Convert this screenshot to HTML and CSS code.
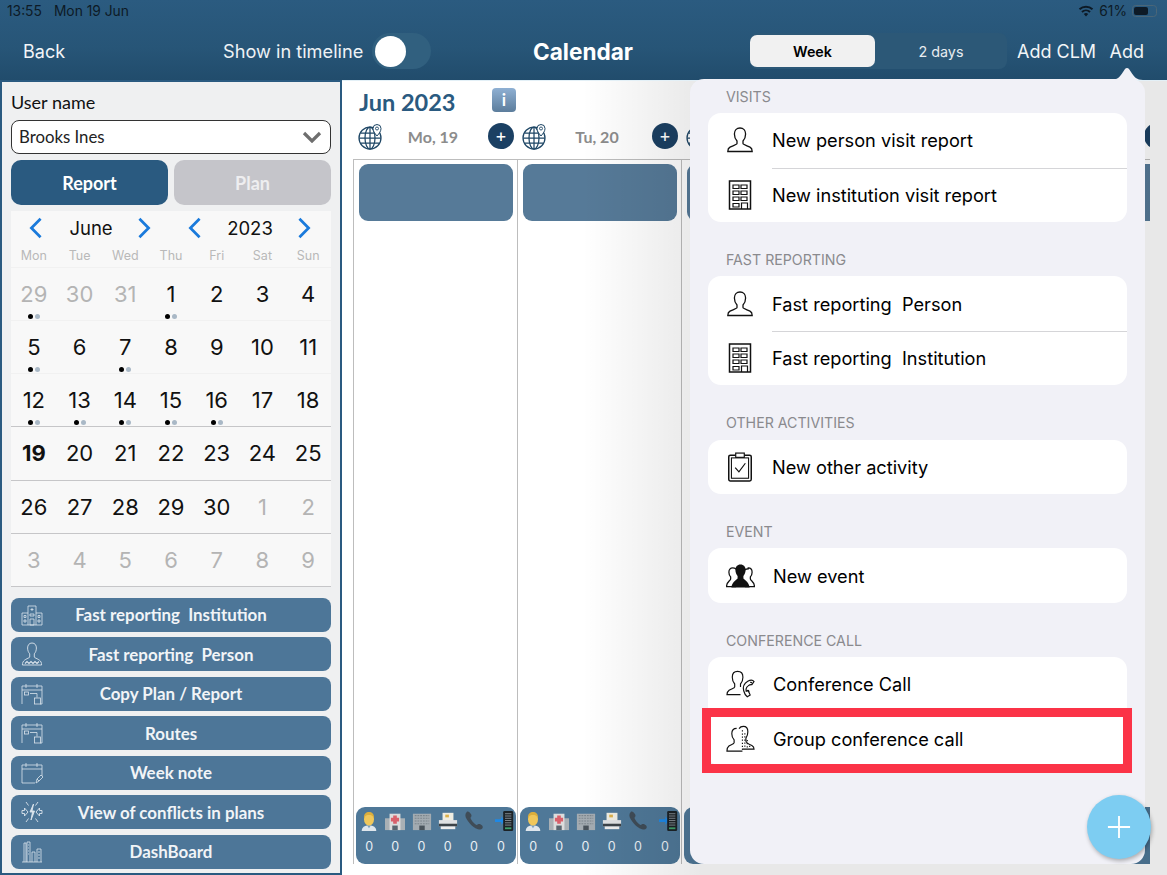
FILE: index.html
```html
<!DOCTYPE html>
<html lang="en">
<head>
<meta charset="utf-8">
<title>Calendar</title>
<link rel="stylesheet" href="styles.css">
</head>
<body>
<svg class="defs" aria-hidden="true">
  <symbol id="i-person" viewBox="0 0 26 26"><path d="M13 1C9.600 1 7.400 3.600 7.400 7c0 3 1.200 5.500 2.600 7v2.600c0 1.200-4.500 2.300-7 3.600-1.600.8-2.200 2.200-2.200 4.300h24.400c0-2.100-.6-3.500-2.200-4.300-2.500-1.300-7-2.400-7-3.600V14c1.400-1.500 2.600-4 2.600-7 0-3.400-2.200-6-5.600-6z" fill="none" stroke="currentColor" stroke-width="1.300"/></symbol>
  <symbol id="i-building" viewBox="0 0 24 30"><g fill="none" stroke="currentColor"><rect x="1.500" y="1" width="21" height="28" stroke-width="1.500"/><path stroke-width="1.200" d="M5 5h6v3.500H5zM13 5h6v3.500h-6zM5 11h6v3.500H5zM13 11h6v3.500h-6zM5 17h6v3.500H5zM13 17h6v3.500h-6zM5 23.500h6V27H5zM13.500 29v-6h6v6"/></g></symbol>
  <symbol id="i-clip" viewBox="0 0 24 28"><g fill="none" stroke="currentColor"><rect x="1.500" y="3" width="21" height="24" rx="1.500" stroke-width="1.400"/><rect x="4" y="5.500" width="16" height="19" stroke-width="1"/><rect x="8" y="1" width="8" height="4" fill="#fff" stroke-width="1.100"/><path d="M7.500 14.500l3.500 4 6-8" stroke-width="1.100"/></g></symbol>
  <symbol id="i-event" viewBox="0 0 30 25"><g fill="currentColor"><path d="M7 4C4.400 4 3 6 3 8.500c0 2 .8 3.800 1.800 5v2c0 1.500-4 2.500-4.300 8H10l5-9-3-7C11 5 9.400 4 7 4zM23 4c2.600 0 4 2 4 4.500 0 2-.8 3.800-1.800 5v2c0 1.500 4 2.500 4.300 8H20l-5-9 3-7c1-1.500 2.600-2.500 5-2.500z" fill="none" stroke="currentColor" stroke-width="1.300"/><path d="M15 .5c-3.400 0-5.300 2.500-5.300 5.600 0 2.600 1 4.800 2.300 6.300v2.300c0 1.500-5.500 2.500-6.500 9.800h19c-1-7.300-6.500-8.300-6.500-9.800v-2.300c1.300-1.500 2.300-3.700 2.300-6.300C20.300 3 18.400.5 15 .5z"/></g></symbol>
  <symbol id="i-conf" viewBox="0 0 30 28"><g fill="none" stroke="currentColor" stroke-width="1.200"><path d="M12 1C8.500 1 6.500 3.600 6.500 7c0 3 1.100 5.400 2.500 7v3c0 1.300-4 2.200-5.800 3.500C1.800 21.500 1 23 1 25h14M12 1c3.500 0 5.500 2.600 5.500 6 0 3-1.100 5.400-2.500 7v3"/><path d="M29 11.500c-1.200-1.800-4-1.800-6.500-.3-3.500 2.100-5.200 6-4.200 9.800.5 2 1.800 4.600 3.700 6.200l3-1.700-2-4.500-2.100.6c-.5-2 .2-4.300 2-5.700 1.200-1 2.700-1.400 3.900-1.200L29 11.500z"/><path d="M21.500 21c1.500-1 2.500 0 2 1.300M25 12.500c1-.6 2 0 1.700 1"/></g></symbol>
  <symbol id="i-group" viewBox="0 0 30 28"><g fill="none" stroke="currentColor" stroke-width="1.200"><path d="M11 3C7.800 3 6 5.400 6 8.500c0 2.800 1 5 2.400 6.500v3c0 1.200-3.800 2-5.400 3.200C1.700 22.200 1 24 1 26.500h16"/><path d="M13.500 3.200C14.500 1.700 16 1 18 1c3 0 4.600 2.400 4.600 5.500 0 2.800-.8 5-2 6.500v3c0 2 3.500 3.500 6.500 5 1.300.7 1.900 1.700 1.900 3.500H17"/><path d="M17 5v20M19.500 8v16M22 15v9M24.500 21v3" stroke-dasharray="1.300 1.900"/></g></symbol>
  <symbol id="i-globe" viewBox="0 0 26 27"><g fill="none" stroke="#1f4766" stroke-width="1.250"><circle cx="12" cy="15" r="11"/><ellipse cx="12" cy="15" rx="5" ry="11"/><path d="M12 4v22M1 15h22M2.500 10h19M2.500 20h19"/></g><path d="M19 13c-2.500-3-4-5-4-7.500a4 4 0 0 1 8 0C23 8 21.500 10 19 13z" fill="#fff" stroke="#1f4766" stroke-width="1"/><circle cx="19" cy="5.500" r="1.500" fill="none" stroke="#1f4766" stroke-width=".9"/></symbol>
  <symbol id="s-hospital" viewBox="0 0 22 22"><g fill="none" stroke="currentColor" stroke-width=".8"><path d="M1 21V9h6M21 21V9h-6M7 21V2h8v19M1 21h20M9.500 5.500h3M11 4v3M3 11.500h2v2H3zM3 16h2v2H3zM17 11.500h2v2h-2zM17 16h2v2h-2zM9 10h4v2H9zM9 15h4v6H9z"/></g></symbol>
  <symbol id="s-doctor" viewBox="0 0 22 24"><g fill="none" stroke="currentColor" stroke-width=".9"><path d="M11 1C8 1 6.600 3.300 6.600 6c0 2.500.9 4.500 2.100 5.800V15C8.700 16 3.500 17 2 20c-.4.800-.6 2-.6 3h19.200c0-1-.2-2.200-.6-3-1.500-3-6.700-4-6.700-5v-3.200c1.200-1.300 2.100-3.300 2.100-5.800C15.400 3.300 14 1 11 1z"/><path d="M4 21.500l2-2 2 2 2-2 2 2 2-2 2 2 2-2" stroke-width="1.100"/></g></symbol>
  <symbol id="s-route" viewBox="0 0 22 22"><g fill="none" stroke="currentColor" stroke-width=".8"><path d="M1 21V3h20v18h-2M1 7h20M5 1v4M16 1v4"/><rect x="3.500" y="9" width="4" height="3"/><path d="M9 10.500h7v4"/><rect x="13.500" y="15" width="6" height="6"/></g></symbol>
  <symbol id="s-note" viewBox="0 0 22 22"><g fill="none" stroke="currentColor" stroke-width=".8"><path d="M14 21H1V3h20v11M1 7h20M5 1v4M16 1v4"/><path d="M15 21l1-4 4-4 2 2-4 4zM16 17l2 2"/></g></symbol>
  <symbol id="s-conflict" viewBox="0 0 22 22"><g fill="none" stroke="currentColor" stroke-width=".9"><path d="M1 9.500h2.500V7L7 11l-3.500 4v-2.500H1zM21 9.500h-2.500V7L15 11l3.500 4v-2.500H21z"/><path d="M12.500 3L9 11h2.500L10 19l3.500-9H11z" fill="currentColor"/><path d="M5 1l2.500 3.500M17 1l-2.500 3.500M5 21l2.500-3.500M17 21l-2.500-3.500"/></g></symbol>
  <symbol id="s-dash" viewBox="0 0 22 22"><g fill="none" stroke="currentColor" stroke-width=".8"><path d="M1 21h20M3 21V2h2v19M6 21V1h3v20M11 21V11h3v10M16 21V8h4v13M17 11h2M17 14h2M17 17h2M7 4h1M7 7h1M7 10h1M7 13h1"/></g></symbol>
  <symbol id="e-doctor" viewBox="0 0 20 22"><path d="M2 22c0-4 3-6 8-6s8 2 8 6z" fill="#dfe6ec"/><path d="M8 16l2 3 2-3z" fill="#7aa0c0"/><ellipse cx="10" cy="9" rx="5.500" ry="7" fill="#f0c75a"/><path d="M4.500 8C4 3 7 1 10 1s6 2 5.500 7C14 5 12 4.500 10 4.500S6 5 4.500 8z" fill="#dcae3c"/></symbol>
  <symbol id="e-hospital" viewBox="0 0 22 20"><path d="M0 7h22v13H0z" fill="#a9b0b5"/><path d="M5 2h12v18H5z" fill="#dcdcdc"/><path d="M9 4h4v2.500h2.500v4H13V13H9v-2.500H6.500v-4H9z" fill="#d9606b"/><path d="M8 15h6v5H8z" fill="#5a6670"/></symbol>
  <symbol id="e-office" viewBox="0 0 22 20"><path d="M1 2h20v18H1z" fill="#a3abb1"/><path d="M3 4h16M3 7h16M3 10h16M3 13h16" stroke="#7d868d" stroke-width="1.300" stroke-dasharray="2 1"/><path d="M8 15h6v5H8z" fill="#49535b"/></symbol>
  <symbol id="e-fax" viewBox="0 0 22 20"><path d="M5 1h12v9H5z" fill="#f0eee2"/><path d="M8 3h4v3H8z" fill="#dcb14a"/><path d="M1 9h20v7H1z" fill="#dfe1e3"/><path d="M1 13h20v3H1z" fill="#3c4349"/><path d="M3 16h16v3H3z" fill="#eeeeee"/></symbol>
  <symbol id="e-phone" viewBox="0 0 22 22"><path d="M3 1C1 3 1 6 3 9s5 7 8 9 5 3 8 2c2-.7 2-2.500 1-4l-2-1.500c-1.500-.8-3 0-4 1-2-.5-6-5-7-8 1-1 1.800-2.500.8-4L6 1.500C5 .5 4 .3 3 1z" fill="#3f4c57"/></symbol>
  <symbol id="e-mobile" viewBox="0 0 22 22"><path d="M0 9h7V6l4 4.500L7 15v-3H0z" fill="#1e88e5"/><rect x="9" y="0" width="11" height="22" rx="1.500" fill="#1c2226"/><path d="M11 3h7M11 5.500h7M11 8h7M11 10.500h7M11 13h7M11 15.500h7" stroke="#8a9298" stroke-width="1"/><path d="M11 18h7v2h-7z" fill="#3fa06a"/></symbol>
</svg>

<header class="topbar">
  <div class="status">
    <div class="status-left"><span>13:55</span><span>Mon 19 Jun</span></div>
    <div class="status-right">
      <svg class="wifi" viewBox="0 0 16 12"><path d="M8 11.500L5.800 9a3.200 3.200 0 0 1 4.400 0zM4.600 7.700L3.300 6.200a7 7 0 0 1 9.400 0l-1.300 1.500a5 5 0 0 0-6.800 0zM2.200 5L.8 3.400a10.800 10.800 0 0 1 14.400 0L13.800 5a8.800 8.800 0 0 0-11.600 0z" fill="#0d1a26"/></svg>
      <span>61%</span>
      <span class="battery"><span class="battery-fill"></span></span>
    </div>
  </div>
  <nav class="nav">
    <span class="nav-link">Back</span>
    <div class="timeline"><span>Show in timeline</span><span class="toggle"><span class="knob"></span></span></div>
    <span class="nav-title">Calendar</span>
    <div class="segment"><span class="seg seg-on">Week</span><span class="seg">2 days</span></div>
    <span class="nav-link">Add CLM</span>
    <span class="nav-link">Add</span>
  </nav>
</header>

<div class="content">
  <aside class="sidebar">
    <div class="user-label">User name</div>
    <div class="select"><span>Brooks Ines</span><svg class="select-chev" viewBox="0 0 20 12"><path d="M2 2l8 8 8-8" fill="none" stroke="#6e6e6e" stroke-width="3.200"/></svg></div>
    <div class="mode">
      <button class="mode-btn mode-on">Report</button>
      <button class="mode-btn mode-off">Plan</button>
    </div>
    <section class="cal">
      <div class="cal-nav">
        <svg class="chev" viewBox="0 0 16 24"><path d="M13 2L3 12l10 10" /></svg>
        <span>June</span>
        <svg class="chev" viewBox="0 0 16 24"><path d="M3 2l10 10L3 22" /></svg>
        <svg class="chev" viewBox="0 0 16 24"><path d="M13 2L3 12l10 10" /></svg>
        <span>2023</span>
        <svg class="chev" viewBox="0 0 16 24"><path d="M3 2l10 10L3 22" /></svg>
      </div>
      <div class="cal-week"><span>Mon</span><span>Tue</span><span>Wed</span><span>Thu</span><span>Fri</span><span>Sat</span><span>Sun</span></div>
      <div class="cal-row">
        <div class="d off">29<i class="dots"></i></div><div class="d off">30</div><div class="d off">31</div><div class="d">1<i class="dots"></i></div><div class="d">2</div><div class="d">3</div><div class="d">4</div>
      </div>
      <div class="cal-row">
        <div class="d">5<i class="dots"></i></div><div class="d">6</div><div class="d">7<i class="dots"></i></div><div class="d">8</div><div class="d">9</div><div class="d">10</div><div class="d">11</div>
      </div>
      <div class="cal-row cal-row-line">
        <div class="d">12<i class="dots"></i></div><div class="d">13<i class="dots"></i></div><div class="d">14<i class="dots"></i></div><div class="d">15<i class="dots"></i></div><div class="d">16<i class="dots"></i></div><div class="d">17</div><div class="d">18</div>
      </div>
      <div class="cal-row cal-row-line">
        <div class="d today">19</div><div class="d">20</div><div class="d">21</div><div class="d">22</div><div class="d">23</div><div class="d">24</div><div class="d">25</div>
      </div>
      <div class="cal-row cal-row-line">
        <div class="d">26</div><div class="d">27</div><div class="d">28</div><div class="d">29</div><div class="d">30</div><div class="d off">1</div><div class="d off">2</div>
      </div>
      <div class="cal-row cal-row-line">
        <div class="d off">3</div><div class="d off">4</div><div class="d off">5</div><div class="d off">6</div><div class="d off">7</div><div class="d off">8</div><div class="d off">9</div>
      </div>
    </section>
    <div class="actions">
      <div class="action"><svg class="action-ic"><use href="#s-hospital"/></svg><span>Fast reporting  Institution</span></div>
      <div class="action"><svg class="action-ic"><use href="#s-doctor"/></svg><span>Fast reporting  Person</span></div>
      <div class="action"><svg class="action-ic"><use href="#s-route"/></svg><span>Copy Plan / Report</span></div>
      <div class="action"><svg class="action-ic"><use href="#s-route"/></svg><span>Routes</span></div>
      <div class="action"><svg class="action-ic"><use href="#s-note"/></svg><span>Week note</span></div>
      <div class="action"><svg class="action-ic"><use href="#s-conflict"/></svg><span>View of conflicts in plans</span></div>
      <div class="action"><svg class="action-ic"><use href="#s-dash"/></svg><span>DashBoard</span></div>
    </div>
  </aside>

  <main class="main">
    <div class="board">
      <div class="board-title"><h1>Jun 2023</h1><span class="info">i</span></div>
      <div class="days">
        <div class="day">
          <div class="day-head"><svg class="globe"><use href="#i-globe"/></svg><span class="day-name">Mo, 19</span><span class="plus">+</span></div>
          <div class="day-body">
            <div class="slot"></div>
            <div class="tally">
              <div class="tc"><svg><use href="#e-doctor"/></svg><span>0</span></div>
              <div class="tc"><svg><use href="#e-hospital"/></svg><span>0</span></div>
              <div class="tc"><svg><use href="#e-office"/></svg><span>0</span></div>
              <div class="tc"><svg><use href="#e-fax"/></svg><span>0</span></div>
              <div class="tc"><svg><use href="#e-phone"/></svg><span>0</span></div>
              <div class="tc"><svg><use href="#e-mobile"/></svg><span>0</span></div>
            </div>
          </div>
        </div>
        <div class="day">
          <div class="day-head"><svg class="globe"><use href="#i-globe"/></svg><span class="day-name">Tu, 20</span><span class="plus">+</span></div>
          <div class="day-body">
            <div class="slot"></div>
            <div class="tally">
              <div class="tc"><svg><use href="#e-doctor"/></svg><span>0</span></div>
              <div class="tc"><svg><use href="#e-hospital"/></svg><span>0</span></div>
              <div class="tc"><svg><use href="#e-office"/></svg><span>0</span></div>
              <div class="tc"><svg><use href="#e-fax"/></svg><span>0</span></div>
              <div class="tc"><svg><use href="#e-phone"/></svg><span>0</span></div>
              <div class="tc"><svg><use href="#e-mobile"/></svg><span>0</span></div>
            </div>
          </div>
        </div>
        <div class="day">
          <div class="day-head"><svg class="globe"><use href="#i-globe"/></svg><span class="day-name"></span><span class="plus"></span></div>
          <div class="day-body"><div class="slot"></div><div class="tally"></div></div>
        </div>
        <div class="day">
          <div class="day-head"><svg class="globe"><use href="#i-globe"/></svg><span class="day-name"></span><span class="plus"></span></div>
          <div class="day-body"><div class="slot"></div><div class="tally"></div></div>
        </div>
        <div class="day">
          <div class="day-head"><svg class="globe"><use href="#i-globe"/></svg><span class="day-name"></span><span class="plus"></span></div>
          <div class="day-body"><div class="slot"></div><div class="tally"></div></div>
        </div>
      </div>
    </div>
  </main>
</div>

<div class="popover">
  <svg class="pop-arrow" viewBox="0 0 32 16"><path d="M0 16C6 16 9 13 12 8l2-3c1-1.500 3-1.500 4 0l2 3c3 5 6 8 12 8z"/></svg>
  <div class="pop-label pop-label-first">VISITS</div>
  <div class="pop-card">
    <div class="pop-row"><svg class="pop-ic"><use href="#i-person"/></svg><span class="pop-text">New person visit report</span></div>
    <div class="pop-row"><svg class="pop-ic"><use href="#i-building"/></svg><span class="pop-text">New institution visit report</span></div>
  </div>
  <div class="pop-label">FAST REPORTING</div>
  <div class="pop-card">
    <div class="pop-row"><svg class="pop-ic"><use href="#i-person"/></svg><span class="pop-text">Fast reporting  Person</span></div>
    <div class="pop-row"><svg class="pop-ic"><use href="#i-building"/></svg><span class="pop-text">Fast reporting  Institution</span></div>
  </div>
  <div class="pop-label">OTHER ACTIVITIES</div>
  <div class="pop-card">
    <div class="pop-row"><svg class="pop-ic"><use href="#i-clip"/></svg><span class="pop-text">New other activity</span></div>
  </div>
  <div class="pop-label">EVENT</div>
  <div class="pop-card">
    <div class="pop-row"><svg class="pop-ic pop-ic-wide"><use href="#i-event"/></svg><span class="pop-text">New event</span></div>
  </div>
  <div class="pop-label">CONFERENCE CALL</div>
  <div class="pop-card">
    <div class="pop-row"><svg class="pop-ic pop-ic-wide"><use href="#i-conf"/></svg><span class="pop-text">Conference Call</span></div>
    <div class="pop-row pop-row-hl"><svg class="pop-ic pop-ic-wide"><use href="#i-group"/></svg><span class="pop-text">Group conference call</span></div>
  </div>
</div>
<div class="fab"><svg viewBox="0 0 26 26"><path d="M13 1v24M1 13h24" stroke="#fff" stroke-width="2" fill="none"/></svg></div>
</body>
</html>
```
FILE: styles.css
```css
*, *::before, *::after { box-sizing: border-box; }
html, body { margin: 0; padding: 0; }
body {
  width: 1167px;
  height: 875px;
  overflow: hidden;
  position: relative;
  background: #fff;
  font-family: "Inter", "Liberation Sans", sans-serif;
  color: #000;
}
.defs { position: absolute; width: 0; height: 0; }

/* top bar */
.topbar {
  height: 80px;
  background: linear-gradient(180deg, #2b5b80 0%, #275577 60%, #214c6c 100%);
  color: #fff;
}
.status {
  height: 22px;
  display: flex;
  justify-content: space-between;
  align-items: center;
  padding: 0 10px 0 7px;
  font-size: 13.800px;
  color: #0d1a26;
}
.status-left { display: flex; gap: 12px; }
.status-right { display: flex; align-items: center; gap: 5px; }
.wifi { width: 16px; height: 12px; }
.battery {
  width: 25px;
  height: 12px;
  border: 1px solid #4a6678;
  border-radius: 3.500px;
  padding: 1px;
  display: block;
}
.battery-fill { display: block; width: 65%; height: 100%; background: #0d1a26; border-radius: 2px; }
.nav {
  height: 58px;
  display: grid;
  grid-template-columns: 200px 310px 217px 267px 92.500px auto;
  align-items: center;
  padding-left: 23px;
}
.nav-link { font-size: 18px; color: #f2f5f8; }
.timeline { display: flex; align-items: center; gap: 8.500px; font-size: 18.200px; color: #eef2f5; }
.toggle {
  width: 59px;
  height: 36px;
  border-radius: 18px;
  background: #31607f;
  padding: 3px 0 0 3px;
  display: block;
}
.knob { display: block; width: 31px; height: 31px; border-radius: 50%; background: #fff; }
.nav-title { font-size: 22.600px; font-weight: 700; }
.segment {
  width: 257px;
  height: 36px;
  display: flex;
  background: #2c5877;
  border-radius: 8px;
  padding: 2px 0;
}
.seg {
  flex: 1;
  display: flex;
  align-items: center;
  justify-content: center;
  font-size: 14.300px;
  color: #e8edf1;
}
.seg-on {
  flex: 0 0 125px;
  background: #f1f1f1;
  color: #000;
  font-weight: 600;
  border-radius: 7px;
}

/* layout */
.content { display: flex; height: 795px; }

/* sidebar */
.sidebar {
  width: 342px;
  flex: none;
  background: #eff0f1;
  border: 2px solid #2a5a80;
  padding: 0 9px;
  font-family: "Lato", "Liberation Sans", sans-serif;
}
.user-label { height: 38px; padding-top: 9px; font-size: 18px; line-height: 22px; color: #111; }
.select {
  height: 34px;
  background: #fff;
  border: 1px solid #333;
  border-radius: 8px;
  display: flex;
  align-items: center;
  justify-content: space-between;
  padding: 0 8px 2px 7px;
  font-size: 16.800px;
  color: #222;
}
.select-chev { width: 20px; height: 12px; margin-top: 2px; }
.mode { display: flex; gap: 6px; margin-top: 6px; }
.mode-btn {
  flex: 1;
  height: 45px;
  border: 0;
  border-radius: 10px;
  font: 700 18px "Lato", "Liberation Sans", sans-serif;
  color: #fff;
}
.mode-on { background: #2a5a80; }
.mode-off { background: #c5c5ca; color: #eeeef0; }

/* month calendar */
.cal { margin-top: 6px; background: #f8f8f8; font-family: "Inter", "Liberation Sans", sans-serif; }
.cal-nav {
  height: 34px;
  display: grid;
  grid-template-columns: 50px 60px 46px 56px 54px 54px;
  align-items: center;
  justify-items: center;
  font-size: 18.500px;
  color: #111;
}
.chev { width: 16px; height: 22px; }
.chev path { fill: none; stroke: #1a7adb; stroke-width: 3; }
.cal-week {
  height: 23px;
  display: grid;
  grid-template-columns: repeat(7, 1fr);
  justify-items: center;
  font-size: 12.500px;
  color: #b9b9b9;
  line-height: 22px;
  border-bottom: 1px solid #f1f1f1;
}
.cal-row {
  height: 53.170px;
  display: grid;
  grid-template-columns: repeat(7, 1fr);
  justify-items: center;
  border-bottom: 1px solid #f1f1f1;
}
.cal-row-line { border-bottom-color: #c6c6c8; }
.d {
  display: flex;
  flex-direction: column;
  align-items: center;
  padding-top: 10px;
  font-size: 22px;
  line-height: 32px;
  color: #111;
}
.d.off { color: #b4b4b4; }
.d.today { font-weight: 700; }
.dots { display: flex; gap: 2px; margin-top: 4px; }
.dots::before, .dots::after { content: ""; width: 5px; height: 5px; border-radius: 50%; background: #000; }
.dots::after { background: #a9b8c6; }

/* action buttons */
.actions { margin-top: 11px; display: flex; flex-direction: column; gap: 5.500px; }
.action {
  height: 34px;
  background: #4d7698;
  border-radius: 8px;
  display: grid;
  grid-template-columns: 40px 1fr 40px;
  align-items: center;
  color: #f1f4f7;
  font-size: 16.900px;
  font-weight: 700;
  text-align: center;
  white-space: pre;
}
.action-ic { width: 22px; height: 24px; margin-left: 10px; color: #dbe4ec; }

/* main board */
.main { flex: 1; position: relative; background: #fff; border-top: 1px solid #e3f0f7; }
.main::after {
  content: "";
  position: absolute;
  inset: 0;
  background: linear-gradient(90deg, rgba(0,0,0,0) 240px, rgba(0,0,0,.09) 360px);
  pointer-events: none;
}
.board { width: 808px; height: 100%; overflow: hidden; }
.board-title { height: 42px; display: flex; align-items: center; padding: 0 0 0 17px; }
.board-title h1 {
  margin: 0;
  width: 133px;
  font: 700 23.500px "Lato", "Liberation Sans", sans-serif;
  color: #2a5a80;
}
.info {
  width: 24px;
  height: 24px;
  margin-top: -4px;
  border-radius: 4px;
  background: linear-gradient(180deg, #8fb0d3, #5c7d9c);
  color: #fff;
  font: 700 17px/24px "Lato", sans-serif;
  text-align: center;
}
.days { display: flex; margin-left: 11px; width: 820px; }
.day { flex: 0 0 164px; font-family: "Lato", "Liberation Sans", sans-serif; }
.day-head { height: 36px; display: flex; align-items: flex-start; padding: 0 3px 0 5px; }
.globe { width: 26px; height: 27px; flex: none; }
.day-name { flex: 1; padding-right: 6px; text-align: center; font-size: 16px; font-weight: 700; line-height: 27px; color: #8c8c8c; }
.plus {
  flex: none;
  width: 26px;
  height: 26px;
  border-radius: 50%;
  background: #1b4063;
  color: #fff;
  font: 400 18px/25px "Inter", sans-serif;
  text-align: center;
}
.day-body {
  height: 705px;
  border-left: 1px solid #bdbdbd;
  border-top: 1px solid #bdbdbd;
  display: flex;
  flex-direction: column;
  justify-content: space-between;
}
.slot { height: 57px; margin: 4px 4px 0 5px; background: #567a98; border-radius: 9px; }
.tally {
  height: 57px;
  margin: 0 1px 0 2px;
  padding: 4px 1px 0 0;
  background: #4f7898;
  border-radius: 9px;
  display: flex;
}
.tc { flex: 1; display: flex; flex-direction: column; align-items: center; }
.tc svg { width: 20px; height: 20px; }
.tc:last-child svg { margin-left: 8px; }
.tc span { margin-top: 8px; font: 400 12.500px/16px "Inter", sans-serif; color: #e9eff4; }

/* popover */
.popover {
  position: absolute;
  left: 690px;
  top: 79px;
  width: 455px;
  height: 785px;
  background: #f1f1f7;
  border-radius: 14px;
  padding: 0 18px;
  z-index: 2;
}
.pop-arrow { position: absolute; left: 421px; top: -15px; width: 32px; height: 16px; fill: #f1f1f7; }
.pop-label {
  height: 34px;
  margin-top: 20.250px;
  padding: 8.500px 0 0 18px;
  font-size: 14.200px;
  line-height: 17px;
  color: #8a8a8e;
}
.pop-label-first { margin-top: 0; padding-top: 9px; }
.pop-card { background: #fff; border-radius: 13px; }
.pop-row {
  height: 54.500px;
  display: flex;
  align-items: center;
  position: relative;
  white-space: pre;
}
.pop-row + .pop-row::before {
  content: "";
  position: absolute;
  left: 64px;
  right: 0;
  top: 0;
  height: 1px;
  background: #d5d5d8;
}
.pop-ic { width: 26px; height: 30px; margin: 0 19px; flex: none; color: #111; }
.pop-ic-wide { width: 29px; margin: 0 18px 0 18px; }
.pop-text { font-size: 18.200px; color: #000; }
.pop-row-hl::after {
  content: "";
  position: absolute;
  left: -6px;
  right: -5px;
  top: -3.500px;
  height: 65px;
  border: 9px solid #fb3347;
}
.pop-row-hl::before { display: none; }
.fab {
  position: absolute;
  left: 1087px;
  top: 795px;
  width: 64px;
  height: 64px;
  border-radius: 50%;
  background: #7dcdf2;
  box-shadow: 1px 2px 4px rgba(0,0,0,.3);
  display: flex;
  align-items: center;
  justify-content: center;
  z-index: 3;
}
.fab svg { width: 24px; height: 24px; }
```
